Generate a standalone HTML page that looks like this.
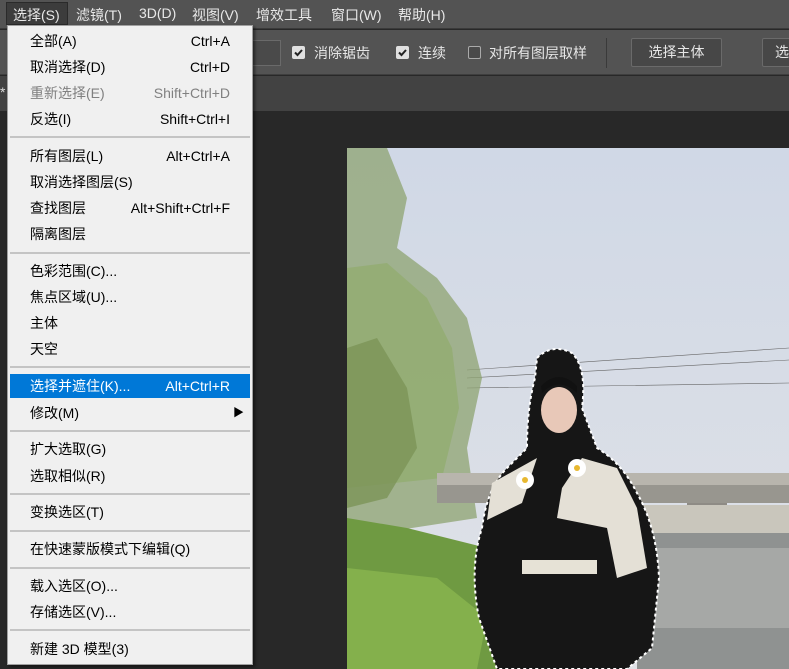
<!DOCTYPE html>
<html><head><meta charset="utf-8"><style>
*{margin:0;padding:0;box-sizing:border-box}
body{width:789px;height:669px;overflow:hidden;background:#282828;font-family:"Liberation Sans","Noto Sans CJK SC",sans-serif;position:relative}
.menubar{position:absolute;left:0;top:0;width:789px;height:29px;background:#535353;border-bottom:1px solid #3a3a3a}
.menubar span{position:absolute;top:5px;color:#e8e8e8;font-size:14px}
.opt{position:absolute;left:0;top:30px;width:789px;height:45px;background:#535353;border-bottom:1px solid #3e3e3e}
.tabs{position:absolute;left:0;top:76px;width:789px;height:35px;background:#424242}
.opt span{position:absolute;color:#e6e6e6;font-size:14px;top:13px}
.cb{position:absolute;top:46px;width:13px;height:13px;border-radius:2px}
.btn{position:absolute;top:38px;height:29px;border:1px solid #6a6a6a;background:#474747;border-radius:2px;color:#e6e6e6;font-size:14px;text-align:center;line-height:27px}
.menu{position:absolute;left:7px;top:25px;width:246px;height:640px;background:#f0f0f0;border:1px solid #a0a0a0;box-shadow:2px 2px 3px rgba(0,0,0,.5)}
.it{position:absolute;left:0;width:244px;height:24px;font-size:14px;color:#000;line-height:24px}
.it .l{position:absolute;left:22px}
.it .r{position:absolute;right:22px}
.dis{color:#808080}
.hl{background:#0078d7;color:#fff;left:2px;width:240px}
.hl .l{left:20px}.hl .r{right:20px}
.sep{position:absolute;left:2px;width:240px;height:2px;background:#c4c4c4}
</style></head><body>
<div class="menubar">
<div style="position:absolute;left:6px;top:2px;width:62px;height:23px;background:#3c3c3c;border:1px solid #2a2a2a"></div>
<span style="left:13px">选择(S)</span>
<span style="left:76px">滤镜(T)</span>
<span style="left:139px">3D(D)</span>
<span style="left:192px">视图(V)</span>
<span style="left:256px">增效工具</span>
<span style="left:331px">窗口(W)</span>
<span style="left:398px">帮助(H)</span>
</div>
<div class="opt">
<div style="position:absolute;left:250px;top:10px;width:31px;height:26px;border:1px solid #6a6a6a;background:#4a4a4a"></div>
<span style="left:314px">消除锯齿</span>
<span style="left:418px">连续</span>
<span style="left:489px">对所有图层取样</span>
<div style="position:absolute;left:606px;top:8px;width:1px;height:30px;background:#3a3a3a"></div>
</div>
<div class="cb" style="left:292px;background:#e0e0e0"><svg width="13" height="13"><path d="M3 6.5l2.5 2.5L10 4" stroke="#222" stroke-width="2" fill="none"/></svg></div>
<div class="cb" style="left:396px;background:#e0e0e0"><svg width="13" height="13"><path d="M3 6.5l2.5 2.5L10 4" stroke="#222" stroke-width="2" fill="none"/></svg></div>
<div class="cb" style="left:468px;border:1px solid #aaa;background:#4a4a4a"></div>
<div class="btn" style="left:631px;width:91px">选择主体</div>
<div class="btn" style="left:762px;width:40px;text-align:left;padding-left:12px">选</div>
<div class="tabs"><span style="position:absolute;left:0;top:8px;color:#ddd;font-size:14px">*</span></div>

<svg style="position:absolute;left:347px;top:148px" width="442" height="521" viewBox="0 0 442 521">
<defs><linearGradient id="sky" x1="0" y1="0" x2="0" y2="1"><stop offset="0" stop-color="#d0d8e6"/><stop offset="1" stop-color="#e0e2e7"/></linearGradient></defs>
<rect width="442" height="521" fill="url(#sky)"/>
<g stroke="#666" stroke-width="0.6"><line x1="120" y1="222" x2="442" y2="200"/><line x1="120" y1="230" x2="442" y2="212"/><line x1="120" y1="240" x2="442" y2="235"/></g>
<path d="M0 0 L40 0 L60 50 L50 100 L90 130 L120 170 L135 230 L120 300 L130 370 L0 390Z" fill="#8ea370" opacity=".75"/>
<path d="M0 120 L40 115 L80 150 L105 200 L112 260 L95 330 L0 340Z" fill="#93ad72" opacity=".85"/>
<path d="M0 200 L30 190 L60 240 L70 300 L40 350 L0 360Z" fill="#7c9458" opacity=".8"/>
<rect x="90" y="325" width="352" height="12" fill="#b8b5ad"/>
<rect x="90" y="337" width="352" height="18" fill="#98968f"/>
<rect x="340" y="355" width="40" height="42" fill="#8e8b85"/>
<rect x="290" y="357" width="152" height="28" fill="#c9c6bc"/>
<rect x="290" y="385" width="152" height="136" fill="#8f9291"/>
<rect x="300" y="400" width="142" height="80" fill="#a6a8a6"/>
<path d="M0 370 L60 380 L140 400 L150 521 L0 521Z" fill="#6f9a42"/>
<path d="M0 420 L90 430 L140 470 L130 521 L0 521Z" fill="#84b04c"/>
<path d="M190 210 Q205 195 225 205 Q240 220 235 260 L250 300 Q275 315 290 345 Q310 380 312 430 L305 500 L280 521 L150 521 L132 470 Q122 420 135 380 Q140 340 160 320 L180 300 Q180 260 188 230Z" fill="#161616" stroke="#fff" stroke-width="2" stroke-dasharray="3 3"/>
<path d="M145 335 L190 310 L175 355 L140 372Z M235 310 L270 320 L290 360 L300 420 L270 430 L260 380 L210 370 L215 340Z" fill="#e4e0d6"/>
<ellipse cx="212" cy="262" rx="18" ry="23" fill="#e8c8b8"/>
<path d="M195 245 Q212 228 230 245 L230 238 Q212 220 194 238Z" fill="#111"/>
<rect x="175" y="412" width="75" height="14" fill="#e6e2d6"/>
<circle cx="178" cy="332" r="9" fill="#fff"/><circle cx="178" cy="332" r="3" fill="#e8b830"/>
<circle cx="230" cy="320" r="9" fill="#fff"/><circle cx="230" cy="320" r="3" fill="#e8b830"/>
</svg>

<div class="menu">
<div class="it" style="top:3px"><span class="l">全部(A)</span><span class="r">Ctrl+A</span></div>
<div class="it" style="top:29px"><span class="l">取消选择(D)</span><span class="r">Ctrl+D</span></div>
<div class="it dis" style="top:55px"><span class="l">重新选择(E)</span><span class="r">Shift+Ctrl+D</span></div>
<div class="it" style="top:81px"><span class="l">反选(I)</span><span class="r">Shift+Ctrl+I</span></div>
<div class="sep" style="top:110px"></div>
<div class="it" style="top:118px"><span class="l">所有图层(L)</span><span class="r">Alt+Ctrl+A</span></div>
<div class="it" style="top:144px"><span class="l">取消选择图层(S)</span></div>
<div class="it" style="top:170px"><span class="l">查找图层</span><span class="r">Alt+Shift+Ctrl+F</span></div>
<div class="it" style="top:196px"><span class="l">隔离图层</span></div>
<div class="sep" style="top:226px"></div>
<div class="it" style="top:233px"><span class="l">色彩范围(C)...</span></div>
<div class="it" style="top:259px"><span class="l">焦点区域(U)...</span></div>
<div class="it" style="top:285px"><span class="l">主体</span></div>
<div class="it" style="top:311px"><span class="l">天空</span></div>
<div class="sep" style="top:340px"></div>
<div class="it hl" style="top:348px"><span class="l">选择并遮住(K)...</span><span class="r">Alt+Ctrl+R</span></div>
<div class="it" style="top:375px"><span class="l">修改(M)</span><span style="position:absolute;right:8px;top:0;font-size:11px">▶</span></div>
<div class="sep" style="top:404px"></div>
<div class="it" style="top:411px"><span class="l">扩大选取(G)</span></div>
<div class="it" style="top:438px"><span class="l">选取相似(R)</span></div>
<div class="sep" style="top:467px"></div>
<div class="it" style="top:474px"><span class="l">变换选区(T)</span></div>
<div class="sep" style="top:504px"></div>
<div class="it" style="top:511px"><span class="l">在快速蒙版模式下编辑(Q)</span></div>
<div class="sep" style="top:541px"></div>
<div class="it" style="top:548px"><span class="l">载入选区(O)...</span></div>
<div class="it" style="top:574px"><span class="l">存储选区(V)...</span></div>
<div class="sep" style="top:603px"></div>
<div class="it" style="top:611px"><span class="l">新建 3D 模型(3)</span></div>
</div>
</body></html>
